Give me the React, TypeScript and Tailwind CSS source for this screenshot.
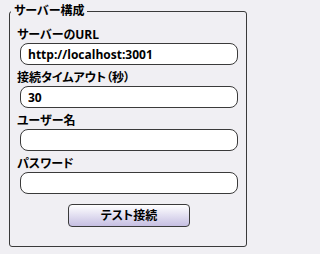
import React from "react";

const fields = [
  { label: "サーバーのURL", value: "http://localhost:3001" },
  { label: "接続タイムアウト（秒）", value: "30" },
  { label: "ユーザー名", value: "" },
  { label: "パスワード", value: "" },
];

const font = {
  fontFamily: '"Open Sans", "Noto Sans CJK JP", sans-serif',
};

export default function App() {
  return (
    <div
      className="w-full min-h-screen bg-[#f0eff3] pt-[4px] pl-[9px] text-black [font-feature-settings:'palt']"
      style={font}
    >
      <fieldset className="w-[238px] h-[243px] border border-[#3a3a3a] rounded-[3px] pl-[10px] pr-[8px] pt-[4px]">
        <legend className="ml-[-9px] px-[3px] text-[12px] leading-[14px] font-bold">
          サーバー構成
        </legend>
        {fields.map((f) => (
          <div key={f.label}>
            <div className="h-[21px] pt-[5px] ml-[-3px] text-[12px] leading-[16px] font-bold">
              {f.label}
            </div>
            <input
              type="text"
              defaultValue={f.value}
              className="block w-full h-[22px] bg-white border border-[#3a3a3a] rounded-[8px] px-[7px] text-[12px] font-bold outline-none"
              style={font}
            />
          </div>
        ))}
        <div className="flex justify-center mt-[10px]">
          <button
            className="w-[122px] h-[23px] border border-[#3a3a3a] rounded-[4px] bg-gradient-to-b from-white to-[#c6bfe2] text-[12px] font-bold [font-feature-settings:'palt']"
            style={font}
          >
            テスト接続
          </button>
        </div>
      </fieldset>
    </div>
  );
}
